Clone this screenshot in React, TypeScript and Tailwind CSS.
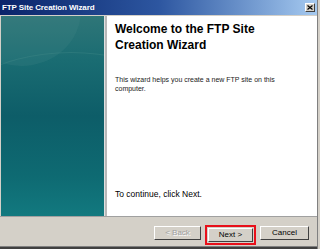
export default function App() {
  return (
    <div className="w-[320px] h-[249px] bg-[#d4d0c8] overflow-hidden flex" style={{ fontFamily: '"Liberation Sans", Arial, sans-serif' }}>
      <div className="w-[318px] h-[249px] flex flex-col border-r border-[#808080] bg-[#d4d0c8]">
        {/* title bar */}
        <div className="h-[15px] flex items-center justify-between bg-gradient-to-r from-[#0a246a] via-[#2d56a0] to-[#a6caf0] pl-[2px] pr-[2px]">
          <span className="text-white font-bold text-[8px] leading-none tracking-[-0.1px]">FTP Site Creation Wizard</span>
          <div className="w-[10px] h-[9px] bg-[#d4d0c8] border border-t-white border-l-white border-b-[#404040] border-r-[#404040] flex items-center justify-center">
            <svg width="6" height="5" viewBox="0 0 6 5">
              <path d="M0.5 0.5 L5.5 4.5 M5.5 0.5 L0.5 4.5" stroke="#000" strokeWidth="1.2" />
            </svg>
          </div>
        </div>
        <div className="h-[1px] bg-[#d4d0c8]" />
        {/* main */}
        <div className="flex h-[200px]">
          <div className="w-[1px] bg-[#d4d0c8]" />
          <div className="w-[103px] relative overflow-hidden bg-[linear-gradient(180deg,#2f7678_0%,#1a6c72_22%,#0d5d68_50%,#0e6a72_80%,#12797f_100%)]">
            <div className="absolute left-[-70px] top-[36px] w-[280px] h-[180px] rounded-[50%] border-t border-[#3a8484] opacity-50" />
            <div className="absolute left-[-40px] top-[-60px] w-[120px] h-[110px] rounded-[50%] bg-[#4a8a8a] opacity-20" />
          </div>
          <div className="w-[3px] bg-[#b8b8b8] border-l border-[#e0e0e0]" />
          <div className="flex-1 bg-white pl-[8px] pt-[5px] flex flex-col">
            <div className="text-[12px] leading-[16px] font-bold text-black">
              Welcome to the FTP Site
              <br />
              Creation Wizard
            </div>
            <div className="mt-[22px] text-[7px] leading-[9px] text-[#222] pr-[30px]">
              This wizard helps you create a new FTP site on this computer.
            </div>
            <div className="mt-auto mb-[17px] text-[8.5px] leading-[10px] text-black">To continue, click Next.</div>
          </div>
        </div>
        {/* bottom */}
        <div className="h-[1px] bg-[#a0a0a0]" />
        <div className="flex-1 flex items-start justify-end pr-[8px] pt-[8px] gap-[6px] border-b border-[#808080]">
          <div className="w-[47px] h-[14px] mt-[1px] bg-[#d4d0c8] border border-t-white border-l-white border-b-[#404040] border-r-[#404040] flex items-center justify-center text-[8px] text-[#a0a0a0] leading-none" style={{ textShadow: '1px 1px 0 #fff' }}>
            &lt; Back
          </div>
          <div className="border-2 border-[#e8101a] p-[1px] -ml-[2px] -mr-[2px]">
            <div className="w-[45px] h-[14px] bg-[#d4d0c8] border border-t-white border-l-white border-b-[#404040] border-r-[#404040] flex items-center justify-center text-[8px] text-black leading-none">
              Next &gt;
            </div>
          </div>
          <div className="w-[49px] h-[14px] mt-[1px] bg-[#d4d0c8] border border-t-white border-l-white border-b-[#404040] border-r-[#404040] flex items-center justify-center text-[8px] text-black leading-none">
            Cancel
          </div>
        </div>
        <div className="h-[2px] bg-[#404040]" />
      </div>
    </div>
  );
}
